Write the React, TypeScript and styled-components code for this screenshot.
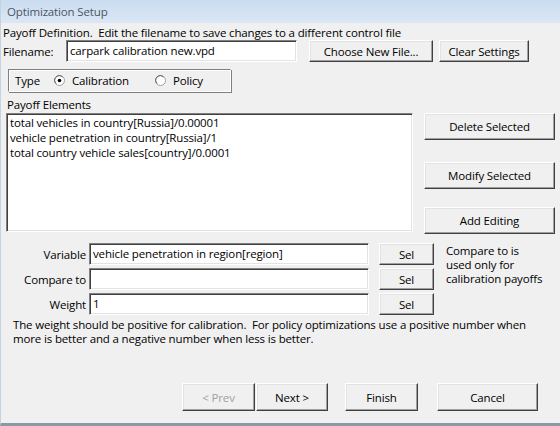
import styled, { createGlobalStyle } from "styled-components";

const Global = createGlobalStyle`
  html, body { margin: 0; padding: 0; background: #f0f0f0; }
  body {
    font-family: "Open Sans", "Noto Sans", "DejaVu Sans", sans-serif;
    font-size: 11.5px;
    letter-spacing: -0.15px;
    color: #000;
  }
`;

const Window = styled.div`
  width: 560px;
  height: 426px;
  box-sizing: border-box;
  background: #f0f0f0;
  border-left: 1px solid #c4d3e3;
  border-bottom: 3px solid #8b97a4;
  display: flex;
  flex-direction: column;
  overflow: hidden;
`;

const TitleBar = styled.div`
  height: 23px;
  flex: none;
  display: flex;
  align-items: center;
  padding-left: 6px;
  background: linear-gradient(#cadcf0, #dbe7f5);
  color: #4b5563;
`;

const Body = styled.div`
  flex: 1;
  display: flex;
  flex-direction: column;
  padding: 2px 0 0 2px;
`;

const Line = styled.div<{ $indent?: number; $top?: number }>`
  height: 15px;
  line-height: 15px;
  margin-top: ${(p) => p.$top ?? 0}px;
  padding-left: ${(p) => p.$indent ?? 0}px;
  white-space: nowrap;
`;

const Row = styled.div<{ $top?: number; $align?: string }>`
  display: flex;
  align-items: ${(p) => p.$align ?? "center"};
  margin-top: ${(p) => p.$top ?? 0}px;
`;

const Label = styled.span<{ $w?: number; $right?: boolean }>`
  width: ${(p) => (p.$w ? `${p.$w}px` : "auto")};
  text-align: ${(p) => (p.$right ? "right" : "left")};
  padding-right: ${(p) => (p.$right ? 3 : 0)}px;
  flex: none;
  white-space: nowrap;
`;

const Field = styled.div<{ $w: number }>`
  width: ${(p) => p.$w}px;
  height: 22px;
  box-sizing: border-box;
  background: #fff;
  border: 1px solid;
  border-color: #808080 #fff #fff #808080;
  box-shadow: inset 1px 1px 0 #404040, inset -1px -1px 0 #e3e3e3;
  padding: 0 3px;
  line-height: 19px;
  white-space: nowrap;
  overflow: hidden;
  flex: none;
`;

const Button = styled.div<{ $w: number; $h?: number; $left?: number; $top?: number; $disabled?: boolean }>`
  width: ${(p) => p.$w}px;
  height: ${(p) => p.$h ?? 22}px;
  margin-left: ${(p) => p.$left ?? 0}px;
  margin-top: ${(p) => p.$top ?? 0}px;
  box-sizing: border-box;
  flex: none;
  display: flex;
  align-items: center;
  justify-content: center;
  border: 1px solid;
  border-color: #fff #404040 #404040 #fff;
  box-shadow: inset -1px -1px 0 #a0a0a0, inset 1px 1px 0 #e3e3e3;
  background: #f0f0f0;
  color: ${(p) => (p.$disabled ? "#a0a0a0" : "#000")};
  white-space: nowrap;
`;

const GroupBox = styled.div`
  margin: 7px 0 0 5px;
  width: 223px;
  height: 23px;
  box-sizing: border-box;
  border: 1px solid;
  border-color: #808080 #fff #fff #808080;
  box-shadow: inset 1px 1px 0 #fff, 1px 1px 0 #808080;
  display: flex;
  align-items: center;
  padding-left: 6px;
`;

const Radio = styled.span<{ $left: number }>`
  display: inline-flex;
  align-items: center;
  gap: 7px;
  margin-left: ${(p) => p.$left}px;
`;

const ListBox = styled.div`
  width: 407px;
  height: 119px;
  box-sizing: border-box;
  background: #fff;
  border: 1px solid;
  border-color: #808080 #fff #fff #808080;
  box-shadow: inset 1px 1px 0 #404040, inset -1px -1px 0 #e3e3e3;
  padding: 1px 3px;
  margin-left: 3px;
  flex: none;
`;

const ListItem = styled.div`
  height: 15px;
  line-height: 15px;
  white-space: nowrap;
`;

const SideButtons = styled.div`
  display: flex;
  flex-direction: column;
  margin-left: 11px;
`;

const EditGrid = styled.div`
  display: grid;
  grid-template-columns: 86px 280px 65px;
  row-gap: 3px;
  align-items: center;
`;

const Note = styled.div<{ $left: number; $top?: number }>`
  margin: ${(p) => p.$top ?? 0}px 0 0 ${(p) => p.$left}px;
  line-height: 14px;
  white-space: nowrap;
`;

const Footer = styled.div`
  display: flex;
  margin-top: auto;
  margin-bottom: 12px;
  padding-left: 179px;
`;

function RadioDot({ checked }: { checked?: boolean }) {
  return (
    <svg width="11" height="11" viewBox="0 0 11 11">
      <circle cx="5.5" cy="5.5" r="5" fill="#fff" stroke="#a0a0a0" />
      <path d="M2 8.5 A4.5 4.5 0 0 1 8.5 2" fill="none" stroke="#606060" />
      {checked && <circle cx="5.5" cy="5.5" r="1.8" fill="#000" />}
    </svg>
  );
}

export default function App() {
  return (
    <>
      <Global />
      <Window>
        <TitleBar>Optimization Setup</TitleBar>
        <Body>
          <Line>Payoff Definition.&nbsp; Edit the filename to save changes to a different control file</Line>
          <Row>
            <Label $w={63}>Filename:</Label>
            <Field $w={231}>carpark calibration new.vpd</Field>
            <Button $w={124} $left={12}>Choose New File...</Button>
            <Button $w={90} $left={6}>Clear Settings</Button>
          </Row>
          <GroupBox>
            Type
            <Radio $left={14}>
              <RadioDot checked />
              Calibration
            </Radio>
            <Radio $left={26}>
              <RadioDot />
              Policy
            </Radio>
          </GroupBox>
          <Line $indent={4} $top={5}>Payoff Elements</Line>
          <Row $top={1} $align="flex-start">
            <ListBox>
              <ListItem>total vehicles in country[Russia]/0.00001</ListItem>
              <ListItem>vehicle penetration in country[Russia]/1</ListItem>
              <ListItem>total country vehicle sales[country]/0.0001</ListItem>
            </ListBox>
            <SideButtons>
              <Button $w={131} $h={27}>Delete Selected</Button>
              <Button $w={131} $h={27} $top={22}>Modify Selected</Button>
              <Button $w={131} $h={27} $top={18}>Add Editing</Button>
            </SideButtons>
          </Row>
          <Row $top={9} $align="flex-start">
            <EditGrid>
              <Label $right>Variable</Label>
              <Field $w={280}>vehicle penetration in region[region]</Field>
              <Button $w={55} $left={10}>Sel</Button>
              <Label $right>Compare to</Label>
              <Field $w={280} />
              <Button $w={55} $left={10}>Sel</Button>
              <Label $right>Weight</Label>
              <Field $w={280}>1</Field>
              <Button $w={55} $left={10}>Sel</Button>
            </EditGrid>
            <Note $left={12} $top={1}>
              Compare to is
              <br />
              used only for
              <br />
              calibration payoffs
            </Note>
          </Row>
          <Note $left={10} $top={3}>
            The weight should be positive for calibration.&nbsp; For policy optimizations use a positive number when
            <br />
            more is better and a negative number when less is better.
          </Note>
          <Footer>
            <Button $w={73} $h={28} $disabled>&lt; Prev</Button>
            <Button $w={72} $h={28} $left={1}>Next &gt;</Button>
            <Button $w={73} $h={28} $left={17}>Finish</Button>
            <Button $w={101} $h={28} $left={19}>Cancel</Button>
          </Footer>
        </Body>
      </Window>
    </>
  );
}
